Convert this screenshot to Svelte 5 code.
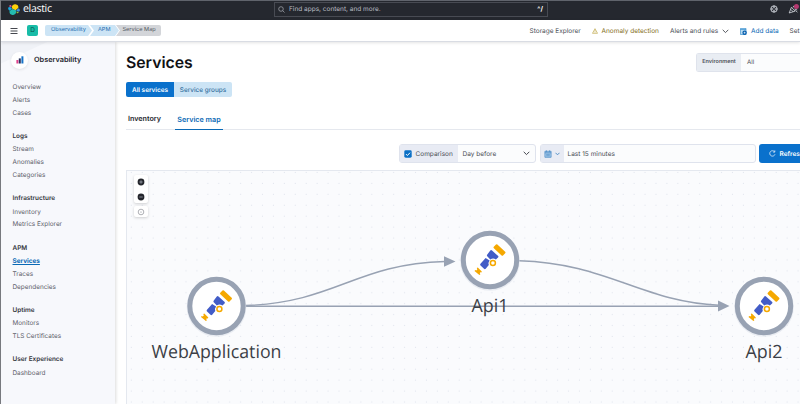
<script>
  const groups = [
    { items: ['Overview', 'Alerts', 'Cases'] },
    { title: 'Logs', items: ['Stream', 'Anomalies', 'Categories'] },
    { title: 'Infrastructure', items: ['Inventory', 'Metrics Explorer'] },
    { title: 'APM', items: ['Services', 'Traces', 'Dependencies'] },
    { title: 'Uptime', items: ['Monitors', 'TLS Certificates'] },
    { title: 'User Experience', items: ['Dashboard'] }
  ];
  // node centres are relative to the map's top left corner
  const nodes = [
    { name: 'WebApplication', x: 89.5, y: 135, w: 130 },
    { name: 'Api1', x: 363, y: 89, w: 37 },
    { name: 'Api2', x: 637, y: 135, w: 37 }
  ];
</script>

<div class="app">
  <header class="top">
    <div class="brand">
      <svg width="12" height="12" viewBox="0 0 12 12">
        <path d="M3.7 3.8A3.4 3.4 0 0 1 10.4 4.8L7.5 7.2L4.4 5.8Z" fill="#fed10a" />
        <path d="M1.6 8A3.3 3.3 0 0 0 8.2 9.2L8.4 7.6L4.4 6Z" fill="#24bbb1" />
        <path d="M1.4 2.4Q2.8 1.2 3.5 3L3.3 3.9L1.2 3.4Z" fill="#ef5098" />
        <path d="M.9 3.9L3.3 4.5L3.9 6L1.4 7.8Q-.9 5.8 .9 3.9Z" fill="#17a8e0" />
        <path d="M10.7 5.2Q13 7.2 10.9 8.8L8.9 7.9L8.4 7Z" fill="#3c8fdc" />
        <path d="M8.8 8.4L10.8 9.2Q10 11 8.6 10Z" fill="#93c83e" />
      </svg>
      <span>elastic</span>
    </div>
    <div class="search">
      <svg width="7" height="7" viewBox="0 0 7 7"><circle cx="3" cy="3" r="2.3" /><path d="M4.7 4.7L6.5 6.5" /></svg>
      <span>Find apps, content, and more.</span>
      <b>^/</b>
    </div>
    <div class="tools">
      <svg width="8" height="8" viewBox="0 0 8 8" fill="none" stroke="#d5d9e0">
        <circle cx="4" cy="4" r="3.2" stroke-width=".9" /><circle cx="4" cy="4" r="1.5" stroke-width=".5" />
        <path d="M4 .8V2.4M4 5.6V7.2M.8 4H2.4M5.6 4H7.2" stroke-width="1.2" />
      </svg>
      <svg class="news" width="12" height="12" viewBox="0 0 12 12" fill="none" stroke="#d5d9e0" stroke-width=".8">
        <path d="M1.2 10L3.4 4.3L7.2 8.1ZM3 6.5L5.3 9M5 4.5L5.8 2.8M6.5 6L9.2 7M7.4 7.4L9.4 9.2" />
        <circle cx="8.4" cy="3.6" r="2.5" fill="#b3396f" stroke="none" />
      </svg>
    </div>
  </header>

  <div class="bar">
    <svg class="menu" width="8" height="8" viewBox="0 0 8 8"><path d="M.5 1.5h7M.5 4h7M.5 6.5h7" /></svg>
    <span class="space">D</span>
    <nav class="crumbs">
      <span class="c1">Observability</span><span class="c2">APM</span><span class="c3">Service Map</span>
    </nav>
    <div class="links">
      <span class="storage">Storage Explorer</span>
      <span class="anomaly">
        <svg width="6" height="6" viewBox="0 0 6 6" fill="none" stroke="#b59a2d" stroke-width=".6"><path d="M3 .7L5.5 5.3H.5ZM3 2.3v1.5M3 4.3v.5" /></svg>
        Anomaly detection
      </span>
      <span class="rules">Alerts and rules
        <svg width="7" height="5" viewBox="0 0 7 5" fill="none" stroke="#45484f" stroke-width=".9"><path d="M.7 .8L3.5 3.6L6.3 .8" /></svg>
      </span>
      <span class="add">
        <svg width="7" height="7" viewBox="0 0 7 7"><path d="M.4 .4h5.6v6.1H.4Z" fill="#b8dbf2" stroke="#3a8fcf" stroke-width=".7" /><path d="M.4 1.5H6" stroke="#3a8fcf" stroke-width=".7" /><circle cx="4.6" cy="4.7" r="2.2" fill="#075fae" /><path d="M4.6 3.7v2M3.6 4.7h2" stroke="#fff" stroke-width=".6" /></svg>
        Add data
      </span>
      <span class="settings">Set</span>
    </div>
  </div>

  <div class="body">
    <aside>
      <div class="solution">
        <span class="disc"><svg width="8" height="8" viewBox="0 0 8 8"><path d="M.4 4h2v3.5H.4Z" fill="#e0408b" /><path d="M2.8 2.4h2v5.1h-2Z" fill="#27305c" /><path d="M5.4 .3h2v7.2h-2Z" fill="#1673c8" /></svg></span>
        <span>Observability</span>
      </div>
      {#each groups as g}
        <section>
          {#if g.title}<h4>{g.title}</h4>{/if}
          {#each g.items as item}
            <a class:active={item === 'Services'}>{item}</a>
          {/each}
        </section>
      {/each}
    </aside>

    <main>
      <div class="head">
        <h1>Services</h1>
        <div class="env"><b>Environment</b><span>All</span></div>
      </div>
      <div class="toggle"><span class="on">All services</span><span class="off">Service groups</span></div>
      <div class="tabs"><span class="inv">Inventory</span><span class="sel">Service map</span></div>
      <div class="filters">
        <div class="compare">
          <span class="check">
            <svg width="8" height="8" viewBox="0 0 8 8"><rect x=".3" y=".3" width="7.4" height="7.4" rx="1.4" fill="#0b70c6" /><path d="M2 4.1L3.4 5.5L6 2.7" fill="none" stroke="#fff" stroke-width="1" /></svg>
            <span>Comparison</span>
          </span>
          <span class="day">Day before</span>
          <svg width="7" height="5" viewBox="0 0 7 5" fill="none" stroke="#45484f" stroke-width="1"><path d="M.7 .8L3.5 3.6L6.3 .8" /></svg>
        </div>
        <div class="date">
          <span class="cal">
            <svg width="8" height="8" viewBox="0 0 8 8"><path d="M.9 1.3h6.2v6H.9Z" fill="#a8cbea" stroke="#4688c4" stroke-width=".7" /><path d="M.9 2.8h6.2M2.4 .3v1.8M5.6 .3v1.8M2.2 4.3h3.6M2.2 5.8h3.6" stroke="#4688c4" stroke-width=".7" /></svg>
            <svg width="5" height="4" viewBox="0 0 5 4" fill="none" stroke="#4688c4" stroke-width=".9"><path d="M.5 .8L2.5 2.8L4.5 .8" /></svg>
          </span>
          <span class="last">Last 15 minutes</span>
        </div>
        <div class="refresh">
          <svg width="7" height="7" viewBox="0 0 7 7" fill="none" stroke="#fff" stroke-width=".7"><path d="M6 4.3A2.7 2.7 0 1 1 5.5 1.7M5.8 .4V2.1H4.1" /></svg>
          <span>Refresh</span>
        </div>
      </div>

      <div class="map">
        <svg class="graph" width="673" height="233" viewBox="0 0 673 233">
          <defs>
            <pattern id="dots" x="-1.1" y="7" width="10.93" height="10.93" patternUnits="userSpaceOnUse">
              <circle cx="5.4" cy="5.4" r=".6" fill="#e1e5ed" />
            </pattern>
            <g id="scope">
              <rect x="-6.3" y="-2.6" width="12.6" height="5.2" rx="1" transform="translate(9.5 -10) rotate(43)" fill="#f5a800" />
              <path d="M.3 -9.4Q1 -10.3 2 -9.6L8.2 -3.9Q8.8 -3 7.8 -2.2L5.9 -.4A4.7 4.7 0 0 0 .3 -.4L-3 -3.9Q-3.3 -4.8 -2.7 -5.4Z" fill="#425cc7" />
              <path d="M-4.4 -1.9L-.4 .4Q-2.3 2.9 -1.2 5L-4.3 8.8Q-5.2 9.5 -6 8.8L-9.7 5.3Q-10.2 4.5 -9.5 3.8Z" fill="#425cc7" />
              <circle cx="2.9" cy="3.1" r="2.5" fill="none" stroke="#f5a800" stroke-width="1.5" />
              <path d="M-13.2 8L-12.2 7.6L-8.2 11.5L-8.6 12.6L-9.8 12.3L-10.2 13.4L-9.6 14.2L-10.6 15L-15.5 10.9L-14.8 9.9L-13.7 10.5L-12.7 9.4Z" fill="#f5a800" />
            </g>
          </defs>
          <rect width="673" height="233" fill="url(#dots)" />
          <g fill="none" stroke="#98a2b3" stroke-width="1.4">
            <path d="M119 134.5C210 131 228 93 318 90.5" />
            <path d="M119 135.3H592" />
            <path d="M392 89.7C480 92 515 131 592 134.2" />
          </g>
          <path d="M317 85.2L328.5 90.5L317 95.8ZM591 129.5L602.5 135L591 140.5Z" fill="#98a2b3" />
          {#each nodes as n}
            <g transform="translate({n.x} {n.y})">
              <circle cy="1" r="29.8" fill="#dde2eb" opacity=".6" />
              <circle r="26.7" fill="#fff" stroke="#98a2b3" stroke-width="5" />
              <use href="#scope" />
              <text y="51.8" text-anchor="middle" textLength={n.w} lengthAdjust="spacingAndGlyphs">{n.name}</text>
            </g>
          {/each}
        </svg>
        <div class="zoom">
          <div class="pair">
            <svg width="8" height="8" viewBox="0 0 8 8"><circle cx="4" cy="4" r="3.4" fill="#24262c" /><path d="M4 2.3v3.4M2.3 4h3.4" stroke="#aeb3bd" stroke-width=".7" /></svg>
            <svg width="8" height="8" viewBox="0 0 8 8"><circle cx="4" cy="4" r="3.4" fill="#24262c" /><path d="M2.3 4h3.4" stroke="#aeb3bd" stroke-width=".7" /></svg>
          </div>
          <div class="center">
            <svg width="8" height="8" viewBox="0 0 8 8"><circle cx="4" cy="4" r="2.8" fill="none" stroke="#777b83" stroke-width=".6" /><circle cx="4" cy="4" r=".6" fill="#777b83" /></svg>
          </div>
        </div>
      </div>
    </main>
  </div>
</div>

<style>
  .app { width: 800px; height: 404px; overflow: hidden; display: flex; flex-direction: column; background: #fff; font: 7.1px/1 Inter, "Liberation Sans", sans-serif; color: #4c4f57; white-space: nowrap; box-sizing: border-box; border-left: 1px solid #77797e; text-rendering: geometricPrecision; }
  .app * { box-sizing: border-box; }
  svg { display: block; flex: none; }
  .top { height: 20px; flex: none; background: #25282f; border-top: 1px solid #60646c; display: flex; align-items: center; }
  .brand { display: flex; align-items: center; width: 273px; padding: 0 0 3px 7px; gap: 3px; color: #fff; font: 10.6px/12px "Open Sans", "Noto Sans", sans-serif; }
  .brand span { letter-spacing: -.35px; }
  .search { width: 274px; height: 15px; margin-bottom: 3px; border: 1px solid #484b53; display: flex; align-items: center; padding: 0 4px 0 3px; gap: 4px; color: #b9bcc3; font-size: 6.5px; }
  .search span { padding-top: 1px; }
  .search svg { fill: none; stroke: #a9adb5; stroke-width: .7; }
  .search b { margin-left: auto; padding-top: 1px; color: #fff; font-size: 6.5px; }
  .tools { margin: 0 0 3px 222px; display: flex; align-items: center; gap: 10px; }
  .bar { height: 22px; flex: none; display: flex; align-items: center; border-bottom: 1px solid #d9dce3; box-shadow: 0 1px 3px #0000001c; z-index: 2; position: relative; background: #fff; }
  .menu { margin-left: 9px; stroke: #45484f; stroke-width: 1; }
  .space { margin-left: 9px; width: 11px; height: 11px; border-radius: 2px; background: #18bca7; color: #0a4f48; font-size: 6.5px; display: grid; place-items: center; }
  .crumbs { display: flex; margin-left: 7px; font-size: 5.6px; color: #1e6cb0; }
  .crumbs span { height: 11px; display: flex; align-items: center; padding-top: 1px; }
  .crumbs .c1 { width: 47px; padding-left: 6px; background: #cce4f5; border-radius: 2px 0 0 2px; clip-path: polygon(0 0, 43px 0, 100% 50%, 43px 100%, 0 100%); }
  .crumbs .c2 { width: 29px; margin-left: -2px; padding-left: 8px; background: #cce4f5; clip-path: polygon(0 0, 25px 0, 100% 50%, 25px 100%, 0 100%, 4px 50%); }
  .crumbs .c3 { width: 45px; margin-left: -3px; padding-left: 6.5px; background: #d3d5d9; color: #515760; border-radius: 0 2px 2px 0; clip-path: polygon(0 0, 100% 0, 100% 100%, 0 100%, 4px 50%); }
  .links { margin-left: auto; display: flex; width: 270.5px; font-size: 6.5px; line-height: 10px; padding-top: 1px; }
  .links span { display: flex; align-items: center; flex: none; }
  .storage { width: 62px; }
  .anomaly { width: 78.5px; gap: 4px; color: #85701d; }
  .rules { width: 70px; gap: 4px; }
  .add { width: 49.5px; gap: 4px; color: #0a69b5; }
  .body { flex: 1; display: flex; min-height: 0; }
  aside { width: 114px; flex: none; background: linear-gradient(155deg, #f0f2f7 0 19px, #f7f8fc 20px); box-shadow: 1px 0 3px #00000024; }
  .solution { height: 39px; display: flex; align-items: center; gap: 6px; padding: 0 0 3px 10px; color: #25272e; font-weight: 600; font-size: 7.3px; }
  .disc { width: 17px; height: 17px; border-radius: 50%; background: #fff; box-shadow: 0 1px 3px #00000018; display: grid; place-items: center; }
  section { padding-left: 11.5px; margin-bottom: 9.8px; }
  section a, h4 { display: flex; align-items: center; height: 12.8px; font-size: 6.4px; color: #5d616a; }
  h4 { margin: 0; height: 14px; font-weight: 600; color: #35373e; }
  section a.active { color: #0a69b5; font-weight: 700; text-decoration: underline; }
  main { flex: 1; min-width: 0; padding-left: 11px; display: flex; flex-direction: column; }
  .head { height: 40px; display: flex; flex: none; justify-content: space-between; }
  h1 { margin: 9.5px 0 0; font-size: 15.8px; line-height: 21px; font-weight: 600; color: #101114; }
  .env { margin-top: 11px; width: 104px; height: 19px; border: 1px solid #dfe3ec; border-right: 0; border-radius: 3px 0 0 3px; display: flex; background: #fbfcfd; }
  .env b { width: 44px; background: #e9edf3; display: grid; place-items: center; font-size: 5.5px; font-weight: 600; }
  .env span { padding: 6px; font-size: 6.2px; }
  .toggle { flex: none; display: flex; height: 15px; font-size: 6.4px; }
  .toggle span { display: grid; place-items: center; padding-top: 1px; }
  .on { width: 48px; background: #0a71cc; color: #fff; font-weight: 600; border-radius: 2px 0 0 2px; }
  .off { width: 58px; background: #cce4f5; color: #35719f; border-radius: 0 2px 2px 0; font-weight: 500; }
  .tabs { flex: none; display: flex; height: 33px; align-items: flex-end; border-bottom: 1px solid #e5e8ee; font-size: 7.2px; font-weight: 600; color: #25272e; }
  .tabs span { height: 21px; display: flex; align-items: center; padding-top: 1px; }
  .tabs .inv { width: 49px; padding-left: 2px; }
  .sel { width: 48px; justify-content: center; color: #0a69b5; border-bottom: 1px solid #0a69b5; margin-bottom: -1px; }
  .filters { flex: none; display: flex; height: 19px; margin: 14px 0 0 272.5px; font-size: 6.5px; }
  .filters span { padding-top: 1px; }
  .compare { width: 137px; border: 1px solid #dfe3ed; border-radius: 3px; display: flex; align-items: center; background: #fbfcfd; }
  .filters .check { width: 58px; height: 100%; display: flex; align-items: center; gap: 4px; padding: 0 0 0 4px; background: #e8ebf4; }
  .filters .day { width: 65px; padding-left: 5px; }
  .date { margin-left: 4px; width: 216px; border: 1px solid #dfe3ed; border-radius: 3px; display: flex; align-items: center; background: #fbfcfd; }
  .filters .cal { width: 23px; height: 100%; display: flex; align-items: center; gap: 3px; padding: 0 0 0 3px; background: #e8ebf4; }
  .filters .last { padding-left: 4px; }
  .refresh { margin-left: 3px; flex: 1; min-width: 0; background: #0a71cc; color: #fff; border-radius: 3px 0 0 3px; display: flex; align-items: center; gap: 4px; padding-left: 10px; font-weight: 600; overflow: hidden; }
  .map { margin-top: 7px; flex: 1; min-height: 0; position: relative; overflow: hidden; background: #fafbfd; border: 1px solid #e4e8ef; border-width: 1px 0 0 1px; }
  .graph text { font: 18.2px "Open Sans", "Noto Sans", sans-serif; fill: #3c3f46; }
  .zoom { position: absolute; left: 7px; top: 4px; }
  .pair, .center { width: 14px; background: #fff; border-radius: 2px; box-shadow: 0 1px 3px #0000002e; display: flex; flex-direction: column; align-items: center; }
  .pair { height: 28px; padding: 3px 0 2px; justify-content: space-between; }
  .center { margin-top: 3px; height: 11px; justify-content: center; }
</style>
